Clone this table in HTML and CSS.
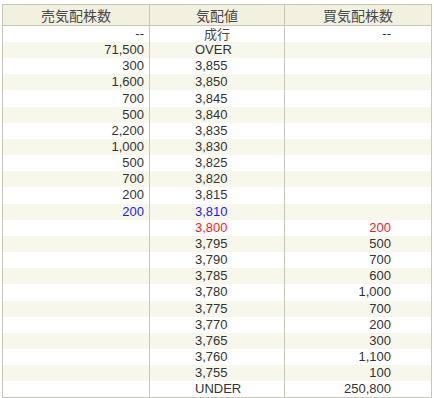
FILE: index.html
```html
<!DOCTYPE html>
<html lang="ja">
<head>
<meta charset="utf-8">
<link rel="stylesheet" href="styles.css">
</head>
<body>
<div class="wrap">
<table class="board">
<colgroup><col class="c1"><col class="c2"><col class="c3"></colgroup>
<thead>
<tr><th>売気配株数</th><th>気配値</th><th>買気配株数</th></tr>
</thead>
<tbody>
<tr><td class="qty">--</td><td class="price center">成行</td><td class="qty buy">--</td></tr>
<tr><td class="qty">71,500</td><td class="price">OVER</td><td class="qty buy"></td></tr>
<tr><td class="qty">300</td><td class="price">3,855</td><td class="qty buy"></td></tr>
<tr><td class="qty">1,600</td><td class="price">3,850</td><td class="qty buy"></td></tr>
<tr><td class="qty">700</td><td class="price">3,845</td><td class="qty buy"></td></tr>
<tr><td class="qty">500</td><td class="price">3,840</td><td class="qty buy"></td></tr>
<tr><td class="qty">2,200</td><td class="price">3,835</td><td class="qty buy"></td></tr>
<tr><td class="qty">1,000</td><td class="price">3,830</td><td class="qty buy"></td></tr>
<tr><td class="qty">500</td><td class="price">3,825</td><td class="qty buy"></td></tr>
<tr><td class="qty">700</td><td class="price">3,820</td><td class="qty buy"></td></tr>
<tr><td class="qty">200</td><td class="price">3,815</td><td class="qty buy"></td></tr>
<tr class="blue"><td class="qty">200</td><td class="price">3,810</td><td class="qty buy"></td></tr>
<tr class="red"><td class="qty"></td><td class="price">3,800</td><td class="qty buy">200</td></tr>
<tr><td class="qty"></td><td class="price">3,795</td><td class="qty buy">500</td></tr>
<tr><td class="qty"></td><td class="price">3,790</td><td class="qty buy">700</td></tr>
<tr><td class="qty"></td><td class="price">3,785</td><td class="qty buy">600</td></tr>
<tr><td class="qty"></td><td class="price">3,780</td><td class="qty buy">1,000</td></tr>
<tr><td class="qty"></td><td class="price">3,775</td><td class="qty buy">700</td></tr>
<tr><td class="qty"></td><td class="price">3,770</td><td class="qty buy">200</td></tr>
<tr><td class="qty"></td><td class="price">3,765</td><td class="qty buy">300</td></tr>
<tr><td class="qty"></td><td class="price">3,760</td><td class="qty buy">1,100</td></tr>
<tr><td class="qty"></td><td class="price">3,755</td><td class="qty buy">100</td></tr>
<tr><td class="qty"></td><td class="price">UNDER</td><td class="qty buy">250,800</td></tr>
</tbody>
</table>
</div>
</body>
</html>
```
FILE: styles.css
```css
html, body {
  margin: 0;
  padding: 0;
  background: #ffffff;
}
.wrap {
  padding: 4px 0 0 2px;
}
.board {
  border-collapse: collapse;
  table-layout: fixed;
  width: 429px;
  font-family: "Liberation Sans", Arial, "Noto Sans CJK JP", sans-serif;
  font-size: 13px;
  color: #333333;
  border: 1px solid #c8c6ba;
}
.c1 { width: 147px; }
.c2 { width: 135px; }
.c3 { width: 147px; }
.board th {
  background: #f2f1df;
  font-weight: normal;
  font-size: 14px;
  height: 20px;
  padding: 0;
  text-align: center;
  border: 1px solid #c8c6ba;
  font-family: "Noto Sans CJK JP", sans-serif;
  line-height: 20px;
  color: #4a4a4a;
}
.board tbody tr {
  height: 16.17px;
}
.board td {
  line-height: 16px;
  padding: 0;
  border-left: 1px solid #c8c6ba;
  border-right: 1px solid #c8c6ba;
  white-space: nowrap;
}
.board tbody tr:nth-child(even) td {
  background: #f8f7ec;
}
.qty {
  text-align: right;
  padding-right: 5px !important;
}
.qty.buy {
  padding-right: 40px !important;
}
.price {
  text-align: left;
  padding-left: 45px !important;
}
.price.center {
  text-align: center;
  padding-left: 0 !important;
  font-family: "Noto Sans CJK JP", sans-serif;
  color: #4a4a4a;
}
.blue td { color: #1a1aff; }
.red td { color: #ff1a1a; }
```
